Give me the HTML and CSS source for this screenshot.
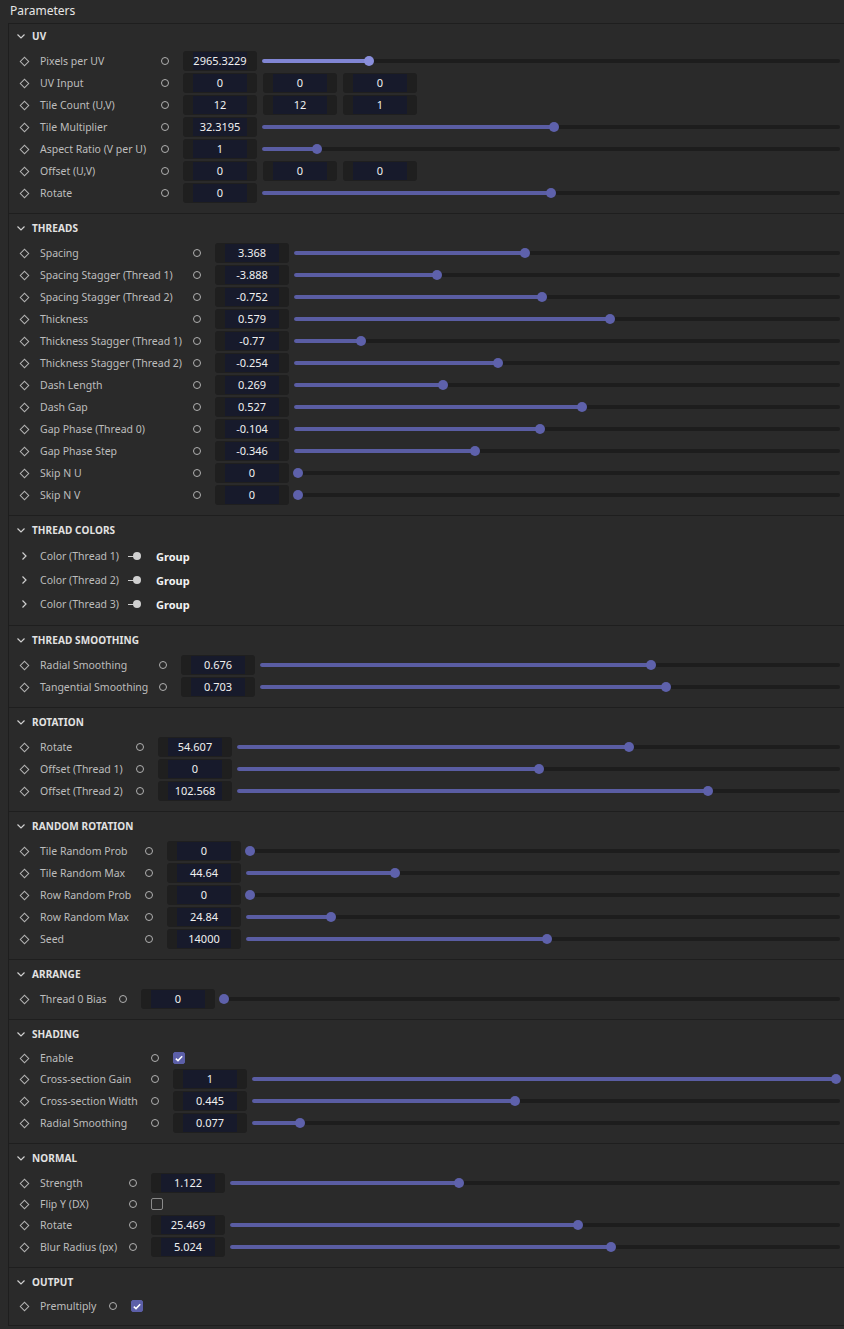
FILE: index.html
```html
<!DOCTYPE html>
<html>
<head>
<meta charset="utf-8">
<link rel="stylesheet" href="styles.css">
</head>
<body>
<div class="topbar">Parameters</div>
<div class="panel">

  <section class="sec sec-first w-uv">
    <div class="sec-head"><span class="chev"><svg width="8" height="5" viewBox="0 0 8 5"><polyline points="0.5,0.5 4,4 7.5,0.5"/></svg></span><span class="title">UV</span></div>
    <div class="row"><span class="dia"></span><span class="lbl">Pixels per UV</span><span class="dot"></span><span class="num"><span>2965.3229</span></span><span class="track hot"><span class="fill" style="--v:0.181"></span></span></div>
    <div class="row"><span class="dia"></span><span class="lbl">UV Input</span><span class="dot"></span><span class="vec"><span class="num"><span>0</span></span><span class="num"><span>0</span></span><span class="num"><span>0</span></span></span></div>
    <div class="row"><span class="dia"></span><span class="lbl">Tile Count (U,V)</span><span class="dot"></span><span class="vec"><span class="num"><span>12</span></span><span class="num"><span>12</span></span><span class="num"><span>1</span></span></span></div>
    <div class="row"><span class="dia"></span><span class="lbl">Tile Multiplier</span><span class="dot"></span><span class="num"><span>32.3195</span></span><span class="track"><span class="fill" style="--v:0.505"></span></span></div>
    <div class="row"><span class="dia"></span><span class="lbl">Aspect Ratio (V per U)</span><span class="dot"></span><span class="num"><span>1</span></span><span class="track"><span class="fill" style="--v:0.089"></span></span></div>
    <div class="row"><span class="dia"></span><span class="lbl">Offset (U,V)</span><span class="dot"></span><span class="vec"><span class="num"><span>0</span></span><span class="num"><span>0</span></span><span class="num"><span>0</span></span></span></div>
    <div class="row"><span class="dia"></span><span class="lbl">Rotate</span><span class="dot"></span><span class="num"><span>0</span></span><span class="track"><span class="fill" style="--v:0.5"></span></span></div>
  </section>

  <section class="sec w-threads">
    <div class="sec-head"><span class="chev"><svg width="8" height="5" viewBox="0 0 8 5"><polyline points="0.5,0.5 4,4 7.5,0.5"/></svg></span><span class="title">THREADS</span></div>
    <div class="row"><span class="dia"></span><span class="lbl">Spacing</span><span class="dot"></span><span class="num"><span>3.368</span></span><span class="track"><span class="fill" style="--v:0.422"></span></span></div>
    <div class="row"><span class="dia"></span><span class="lbl">Spacing Stagger (Thread 1)</span><span class="dot"></span><span class="num"><span>-3.888</span></span><span class="track"><span class="fill" style="--v:0.258"></span></span></div>
    <div class="row"><span class="dia"></span><span class="lbl">Spacing Stagger (Thread 2)</span><span class="dot"></span><span class="num"><span>-0.752</span></span><span class="track"><span class="fill" style="--v:0.454"></span></span></div>
    <div class="row"><span class="dia"></span><span class="lbl">Thickness</span><span class="dot"></span><span class="num"><span>0.579</span></span><span class="track"><span class="fill" style="--v:0.58"></span></span></div>
    <div class="row"><span class="dia"></span><span class="lbl">Thickness Stagger (Thread 1)</span><span class="dot"></span><span class="num"><span>-0.77</span></span><span class="track"><span class="fill" style="--v:0.117"></span></span></div>
    <div class="row"><span class="dia"></span><span class="lbl">Thickness Stagger (Thread 2)</span><span class="dot"></span><span class="num"><span>-0.254</span></span><span class="track"><span class="fill" style="--v:0.372"></span></span></div>
    <div class="row"><span class="dia"></span><span class="lbl">Dash Length</span><span class="dot"></span><span class="num"><span>0.269</span></span><span class="track"><span class="fill" style="--v:0.27"></span></span></div>
    <div class="row"><span class="dia"></span><span class="lbl">Dash Gap</span><span class="dot"></span><span class="num"><span>0.527</span></span><span class="track"><span class="fill" style="--v:0.528"></span></span></div>
    <div class="row"><span class="dia"></span><span class="lbl">Gap Phase (Thread 0)</span><span class="dot"></span><span class="num"><span>-0.104</span></span><span class="track"><span class="fill" style="--v:0.45"></span></span></div>
    <div class="row"><span class="dia"></span><span class="lbl">Gap Phase Step</span><span class="dot"></span><span class="num"><span>-0.346</span></span><span class="track"><span class="fill" style="--v:0.329"></span></span></div>
    <div class="row"><span class="dia"></span><span class="lbl">Skip N U</span><span class="dot"></span><span class="num"><span>0</span></span><span class="track"><span class="fill" style="--v:0"></span></span></div>
    <div class="row"><span class="dia"></span><span class="lbl">Skip N V</span><span class="dot"></span><span class="num"><span>0</span></span><span class="track"><span class="fill" style="--v:0"></span></span></div>
  </section>

  <section class="sec">
    <div class="sec-head"><span class="chev"><svg width="8" height="5" viewBox="0 0 8 5"><polyline points="0.5,0.5 4,4 7.5,0.5"/></svg></span><span class="title">THREAD COLORS</span></div>
    <div class="grow"><span class="chev-r"><svg width="5" height="8" viewBox="0 0 5 8"><polyline points="0.5,0.5 4,4 0.5,7.5"/></svg></span><span class="glbl">Color (Thread 1)</span><span class="link"></span><span class="grp">Group</span></div>
    <div class="grow"><span class="chev-r"><svg width="5" height="8" viewBox="0 0 5 8"><polyline points="0.5,0.5 4,4 0.5,7.5"/></svg></span><span class="glbl">Color (Thread 2)</span><span class="link"></span><span class="grp">Group</span></div>
    <div class="grow"><span class="chev-r"><svg width="5" height="8" viewBox="0 0 5 8"><polyline points="0.5,0.5 4,4 0.5,7.5"/></svg></span><span class="glbl">Color (Thread 3)</span><span class="link"></span><span class="grp">Group</span></div>
  </section>

  <section class="sec w-smooth">
    <div class="sec-head"><span class="chev"><svg width="8" height="5" viewBox="0 0 8 5"><polyline points="0.5,0.5 4,4 7.5,0.5"/></svg></span><span class="title">THREAD SMOOTHING</span></div>
    <div class="row"><span class="dia"></span><span class="lbl">Radial Smoothing</span><span class="dot"></span><span class="num"><span>0.676</span></span><span class="track"><span class="fill" style="--v:0.677"></span></span></div>
    <div class="row"><span class="dia"></span><span class="lbl">Tangential Smoothing</span><span class="dot"></span><span class="num"><span>0.703</span></span><span class="track"><span class="fill" style="--v:0.703"></span></span></div>
  </section>

  <section class="sec w-rot">
    <div class="sec-head"><span class="chev"><svg width="8" height="5" viewBox="0 0 8 5"><polyline points="0.5,0.5 4,4 7.5,0.5"/></svg></span><span class="title">ROTATION</span></div>
    <div class="row"><span class="dia"></span><span class="lbl">Rotate</span><span class="dot"></span><span class="num"><span>54.607</span></span><span class="track"><span class="fill" style="--v:0.652"></span></span></div>
    <div class="row"><span class="dia"></span><span class="lbl">Offset (Thread 1)</span><span class="dot"></span><span class="num"><span>0</span></span><span class="track"><span class="fill" style="--v:0.501"></span></span></div>
    <div class="row"><span class="dia"></span><span class="lbl">Offset (Thread 2)</span><span class="dot"></span><span class="num"><span>102.568</span></span><span class="track"><span class="fill" style="--v:0.785"></span></span></div>
  </section>

  <section class="sec w-rand">
    <div class="sec-head"><span class="chev"><svg width="8" height="5" viewBox="0 0 8 5"><polyline points="0.5,0.5 4,4 7.5,0.5"/></svg></span><span class="title">RANDOM ROTATION</span></div>
    <div class="row"><span class="dia"></span><span class="lbl">Tile Random Prob</span><span class="dot"></span><span class="num"><span>0</span></span><span class="track"><span class="fill" style="--v:0"></span></span></div>
    <div class="row"><span class="dia"></span><span class="lbl">Tile Random Max</span><span class="dot"></span><span class="num"><span>44.64</span></span><span class="track"><span class="fill" style="--v:0.247"></span></span></div>
    <div class="row"><span class="dia"></span><span class="lbl">Row Random Prob</span><span class="dot"></span><span class="num"><span>0</span></span><span class="track"><span class="fill" style="--v:0"></span></span></div>
    <div class="row"><span class="dia"></span><span class="lbl">Row Random Max</span><span class="dot"></span><span class="num"><span>24.84</span></span><span class="track"><span class="fill" style="--v:0.138"></span></span></div>
    <div class="row"><span class="dia"></span><span class="lbl">Seed</span><span class="dot"></span><span class="num"><span>14000</span></span><span class="track"><span class="fill" style="--v:0.507"></span></span></div>
  </section>

  <section class="sec w-arr">
    <div class="sec-head"><span class="chev"><svg width="8" height="5" viewBox="0 0 8 5"><polyline points="0.5,0.5 4,4 7.5,0.5"/></svg></span><span class="title">ARRANGE</span></div>
    <div class="row"><span class="dia"></span><span class="lbl">Thread 0 Bias</span><span class="dot"></span><span class="num"><span>0</span></span><span class="track"><span class="fill" style="--v:0"></span></span></div>
  </section>

  <section class="sec w-shade">
    <div class="sec-head"><span class="chev"><svg width="8" height="5" viewBox="0 0 8 5"><polyline points="0.5,0.5 4,4 7.5,0.5"/></svg></span><span class="title">SHADING</span></div>
    <div class="row row-chk"><span class="dia"></span><span class="lbl">Enable</span><span class="dot"></span><span class="chk on"><svg width="8" height="7" viewBox="0 0 8 7"><polyline points="0.8,3.6 3,5.6 7.2,1.2"/></svg></span></div>
    <div class="row"><span class="dia"></span><span class="lbl">Cross-section Gain</span><span class="dot"></span><span class="num"><span>1</span></span><span class="track"><span class="fill" style="--v:1"></span></span></div>
    <div class="row"><span class="dia"></span><span class="lbl">Cross-section Width</span><span class="dot"></span><span class="num"><span>0.445</span></span><span class="track"><span class="fill" style="--v:0.446"></span></span></div>
    <div class="row"><span class="dia"></span><span class="lbl">Radial Smoothing</span><span class="dot"></span><span class="num"><span>0.077</span></span><span class="track"><span class="fill" style="--v:0.076"></span></span></div>
  </section>

  <section class="sec w-norm">
    <div class="sec-head"><span class="chev"><svg width="8" height="5" viewBox="0 0 8 5"><polyline points="0.5,0.5 4,4 7.5,0.5"/></svg></span><span class="title">NORMAL</span></div>
    <div class="row"><span class="dia"></span><span class="lbl">Strength</span><span class="dot"></span><span class="num"><span>1.122</span></span><span class="track"><span class="fill" style="--v:0.374"></span></span></div>
    <div class="row row-chk"><span class="dia"></span><span class="lbl">Flip Y (DX)</span><span class="dot"></span><span class="chk"></span></div>
    <div class="row"><span class="dia"></span><span class="lbl">Rotate</span><span class="dot"></span><span class="num"><span>25.469</span></span><span class="track"><span class="fill" style="--v:0.571"></span></span></div>
    <div class="row"><span class="dia"></span><span class="lbl">Blur Radius (px)</span><span class="dot"></span><span class="num"><span>5.024</span></span><span class="track"><span class="fill" style="--v:0.627"></span></span></div>
  </section>

  <section class="sec w-out">
    <div class="sec-head"><span class="chev"><svg width="8" height="5" viewBox="0 0 8 5"><polyline points="0.5,0.5 4,4 7.5,0.5"/></svg></span><span class="title">OUTPUT</span></div>
    <div class="row row-chk"><span class="dia"></span><span class="lbl">Premultiply</span><span class="dot"></span><span class="chk on"><svg width="8" height="7" viewBox="0 0 8 7"><polyline points="0.8,3.6 3,5.6 7.2,1.2"/></svg></span></div>
  </section>

</div>
</body>
</html>
```

FILE: styles.css
```css
html, body {
  margin: 0;
  padding: 0;
  background: #2a2a2a;
  font-family: "Noto Sans", "Open Sans", "Liberation Sans", sans-serif;
  font-size: 10.5px;
  color: #bdbdbd;
}

.topbar {
  height: 23px;
  line-height: 21px;
  padding-left: 10px;
  font-size: 12px;
  color: #e6e6e6;
  background: #2a2a2a;
}

.panel {
  margin-left: 8px;
  border-left: 1px solid #1e1e1e;
  border-top: 1px solid #1e1e1e;
}

.sec {
  --lw: 100px;
  padding: 4px 4px 9px 7px;
  border-bottom: 1px solid #1e1e1e;
}
.sec-first { padding-top: 2px; }

.w-uv { --lw: 119px; }
.w-threads { --lw: 151px; }
.w-smooth { --lw: 117px; }
.w-rot { --lw: 94px; }
.w-rand { --lw: 103px; }
.w-arr { --lw: 77px; }
.w-shade { --lw: 109px; }
.w-norm { --lw: 87px; }
.w-out { --lw: 67px; }

.sec-head {
  display: flex;
  align-items: center;
  height: 20px;
  margin-bottom: 4px;
}
.chev {
  width: 9px;
  display: flex;
  justify-content: center;
  margin-right: 7px;
}
.chev svg polyline, .chev-r svg polyline {
  fill: none;
  stroke: #cfcfcf;
  stroke-width: 1.2;
}
.title {
  font-size: 10px;
  font-weight: 700;
  color: #e2e2e2;
  letter-spacing: 0.1px;
}

.row {
  display: flex;
  align-items: center;
  height: 22px;
}
.row-chk { height: 20px; }

.dia {
  width: 16px;
  height: 16px;
  position: relative;
  flex: none;
  margin-right: 8px;
}
.dia::before {
  content: "";
  position: absolute;
  left: 4.5px;
  top: 4.5px;
  width: 5px;
  height: 5px;
  border: 1.3px solid #b3b3b3;
  transform: rotate(45deg);
}

.lbl {
  width: var(--lw);
  flex: none;
  white-space: nowrap;
  color: #bdbdbd;
}

.dot {
  width: 12px;
  height: 12px;
  flex: none;
  display: flex;
  align-items: center;
  justify-content: center;
  margin-right: 12px;
}
.dot::before {
  content: "";
  width: 6px;
  height: 6px;
  border: 1.3px solid #b0b0b0;
  border-radius: 50%;
}

.num {
  width: 74px;
  height: 20px;
  flex: none;
  box-sizing: border-box;
  background: #1f1f1f;
  border-radius: 3px;
  padding: 1px 10px;
  display: flex;
  font-size: 11px;
}
.num span {
  flex: 1;
  background: #171a2b;
  color: #f0f0f0;
  text-align: center;
  line-height: 18px;
  white-space: nowrap;
  display: flex;
  justify-content: center;
}

.vec {
  display: flex;
  gap: 6px;
}

.track {
  flex: 1;
  height: 4px;
  margin-left: 5px;
  background: #1d1d1d;
  border-radius: 2px;
  display: flex;
}
.fill {
  width: calc(4px + (100% - 8px) * var(--v));
  height: 4px;
  background: #5a5da3;
  border-radius: 2px;
  position: relative;
}
.fill::after {
  content: "";
  position: absolute;
  right: -5px;
  top: -3px;
  width: 10px;
  height: 10px;
  border-radius: 50%;
  background: #5e61ab;
}
.track.hot .fill { background: #8186d4; }
.track.hot .fill::after { background: #8a8fdc; }

.chk {
  width: 12px;
  height: 12px;
  box-sizing: border-box;
  border: 1.3px solid #8a8a8a;
  border-radius: 2px;
  display: flex;
  align-items: center;
  justify-content: center;
}
.chk.on {
  background: #5c5fa8;
  border-color: #5c5fa8;
}
.chk svg polyline {
  fill: none;
  stroke: #ffffff;
  stroke-width: 1.5;
}

.grow {
  display: flex;
  align-items: center;
  height: 24px;
}
.chev-r {
  width: 16px;
  flex: none;
  display: flex;
  justify-content: center;
  margin-right: 8px;
}
.glbl {
  width: 88px;
  flex: none;
  white-space: nowrap;
  color: #bdbdbd;
}
.link {
  width: 14px;
  height: 8px;
  flex: none;
  position: relative;
  margin-right: 14px;
}
.link::before {
  content: "";
  position: absolute;
  left: 0;
  top: 3.5px;
  width: 6px;
  height: 1.2px;
  background: #cfcfcf;
}
.link::after {
  content: "";
  position: absolute;
  left: 5px;
  top: 0;
  width: 8px;
  height: 8px;
  border-radius: 50%;
  background: #d0d0d0;
}
.grp {
  font-weight: 700;
  color: #f2f2f2;
  font-size: 11px;
}
```
